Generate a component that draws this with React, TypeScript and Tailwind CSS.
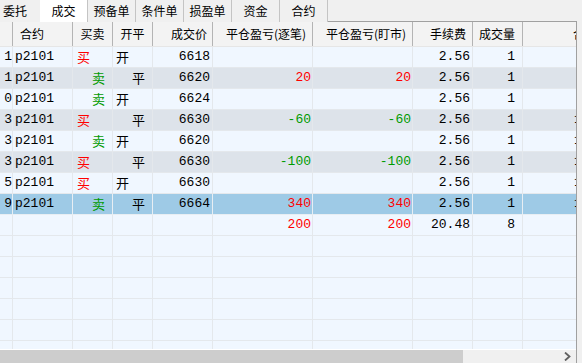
import React from 'react';

type Side = '买' | '卖';
type Act = '开' | '平';

interface Fill {
  n: string;
  side: Side;
  act: Act;
  price: string;
  pnl?: string;
  tail?: boolean;
}

const fills: Fill[] = [
  { n: '1', side: '买', act: '开', price: '6618' },
  { n: '1', side: '卖', act: '平', price: '6620', pnl: '20' },
  { n: '0', side: '卖', act: '开', price: '6624' },
  { n: '3', side: '买', act: '平', price: '6630', pnl: '-60', tail: true },
  { n: '3', side: '卖', act: '开', price: '6620', tail: true },
  { n: '3', side: '买', act: '平', price: '6630', pnl: '-100', tail: true },
  { n: '5', side: '买', act: '开', price: '6630', tail: true },
  { n: '9', side: '卖', act: '平', price: '6664', pnl: '340', tail: true },
];

const tabs = ['委托', '成交', '预备单', '条件单', '损盈单', '资金', '合约'];

const cjk = "font-['Noto_Sans_CJK_SC',sans-serif]";
const mono = "font-['Liberation_Mono','Noto_Sans_CJK_SC',monospace]";
const cols = 'grid grid-cols-[13px_60px_40px_40px_60px_100px_100px_60px_50px_53px]';
const cell = 'h-[21px] border-r border-b border-[#e4e8ec] overflow-hidden whitespace-nowrap flex items-center';

const pnlColor = (v?: string) => (v && v.startsWith('-') ? 'text-[#009a00]' : 'text-[#ff0000]');

export default function App() {
  const empty = Array.from({ length: 7 });

  return (
    <div className={`w-[582px] h-[363px] overflow-hidden bg-[#f0f0f0] flex flex-col text-black ${cjk}`}>
      {/* tab strip */}
      <div className="flex h-[22px] shrink-0">
        {tabs.map((t, i) => (
          <div
            key={t}
            className={`h-full flex items-center justify-center text-[12px] ${
              i === 0 ? 'w-[40px] pr-[10px]' : 'w-[48px]'
            } ${i === 1 ? 'bg-white' : 'bg-[#f0f0f0]'} ${i >= 1 ? 'border-r border-[#c4c4c4]' : ''}`}
          >
            {t}
          </div>
        ))}
        <div className="flex-1 border-b border-[#a0a0a0] mr-[5px]" />
      </div>

      <div className="flex flex-1 min-h-0">
        <div className="w-[577px] border-r border-[#a0a0a0] flex flex-col min-h-0 overflow-hidden">
          {/* header */}
          <div className={`${cols} h-[25px] shrink-0 bg-[#f3f3f3] border-b border-[#e6e6e6] text-[12px]`}>
            <div className="border-r border-[#b4b4b4]" />
            <div className="border-r border-[#b4b4b4] flex items-center pl-[7px]">合约</div>
            <div className="border-r border-[#b4b4b4] flex items-center justify-center">买卖</div>
            <div className="border-r border-[#b4b4b4] flex items-center justify-center">开平</div>
            <div className="border-r border-[#b4b4b4] flex items-center justify-end pr-[5px]">成交价</div>
            <div className="border-r border-[#b4b4b4] flex items-center justify-end pr-[6px]">平仓盈亏(逐笔)</div>
            <div className="border-r border-[#b4b4b4] flex items-center justify-end pr-[6px]">平仓盈亏(盯市)</div>
            <div className="border-r border-[#b4b4b4] flex items-center justify-end pr-[6px]">手续费</div>
            <div className="border-r border-[#b4b4b4] flex items-center justify-end pr-[7px]">成交量</div>
            <div className="flex items-center overflow-hidden whitespace-nowrap pl-[50px]">合约</div>
          </div>

          {/* body */}
          <div className="flex-1 min-h-0 overflow-hidden bg-[#f0f7ff] text-[13px]">
            {fills.map((f, i) => {
              const bg = i === 7 ? 'bg-[#9ecae6]' : i % 2 === 1 ? 'bg-[#dde3ea]' : 'bg-[#f0f7ff]';
              const line = i === 7 ? 'border-[#e8eef3]' : '';
              return (
                <div key={i} className={`${cols} ${bg}`}>
                  <div className={`${cell} ${line} ${mono} justify-end`}>{f.n}</div>
                  <div className={`${cell} ${line} ${mono} pl-[2px]`}>p2101</div>
                  <div
                    className={`${cell} ${line} ${f.side === '买' ? 'pl-[4px] text-[#ff0000]' : 'pl-[19px] text-[#009a00]'}`}
                  >
                    {f.side}
                  </div>
                  <div className={`${cell} ${line} ${f.act === '开' ? 'pl-[3px]' : 'pl-[19px]'}`}>{f.act}</div>
                  <div className={`${cell} ${line} ${mono} justify-end pr-[2px]`}>{f.price}</div>
                  <div className={`${cell} ${line} ${mono} justify-end pr-[1px] ${pnlColor(f.pnl)}`}>{f.pnl}</div>
                  <div className={`${cell} ${line} ${mono} justify-end pr-[1px] ${pnlColor(f.pnl)}`}>{f.pnl}</div>
                  <div className={`${cell} ${line} ${mono} justify-end pr-[2px]`}>2.56</div>
                  <div className={`${cell} ${line} ${mono} justify-end pr-[7px]`}>1</div>
                  <div className={`${cell} ${line} ${mono} pl-[51px] border-r-0`}>{f.tail ? '1' : ''}</div>
                </div>
              );
            })}

            {/* totals */}
            <div className={cols}>
              <div className={cell} />
              <div className={cell} />
              <div className={cell} />
              <div className={cell} />
              <div className={cell} />
              <div className={`${cell} ${mono} justify-end pr-[1px] text-[#ff0000]`}>200</div>
              <div className={`${cell} ${mono} justify-end pr-[1px] text-[#ff0000]`}>200</div>
              <div className={`${cell} ${mono} justify-end pr-[2px]`}>20.48</div>
              <div className={`${cell} ${mono} justify-end pr-[7px]`}>8</div>
              <div className={`${cell} border-r-0`} />
            </div>

            {empty.map((_, i) => (
              <div key={`e${i}`} className={cols}>
                {Array.from({ length: 10 }).map((__, j) => (
                  <div key={j} className={`${cell} ${j === 9 ? 'border-r-0' : ''}`} />
                ))}
              </div>
            ))}
          </div>

          {/* horizontal scrollbar */}
          <div className="h-[14px] shrink-0 border-t border-white bg-[#f0f0f0] flex items-stretch">
            <div className="w-[463px] bg-[#cdcdcd]" />
            <div className="flex-1" />
            <div className="w-[17px] flex items-center justify-center">
              <svg width="7" height="9" viewBox="0 0 7 9">
                <path d="M1 0.5 L5.5 4.5 L1 8.5" fill="none" stroke="#606060" strokeWidth="1.8" />
              </svg>
            </div>
          </div>
        </div>
        <div className="flex-1 bg-[#f0f0f0]" />
      </div>
    </div>
  );
}
